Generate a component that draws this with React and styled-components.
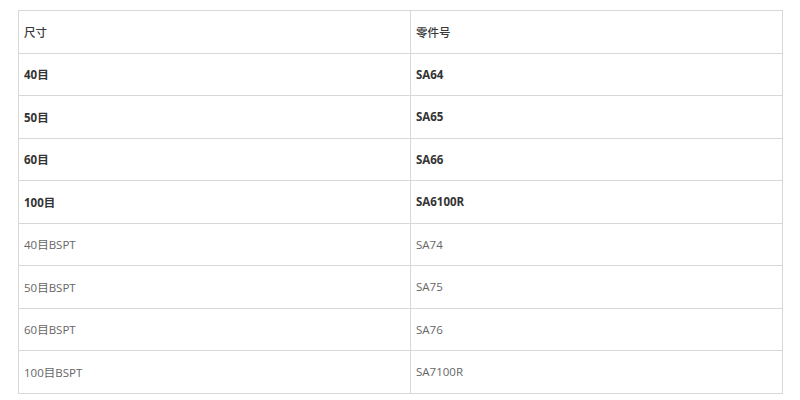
import React from 'react';
import styled, { createGlobalStyle } from 'styled-components';

const GlobalStyle = createGlobalStyle`
  body {
    margin: 0;
    background: #fff;
    font-family: "Open Sans", "Noto Sans CJK SC", sans-serif;
  }
`;

const Page = styled.div`
  padding: 10px 17px 0 18px;
`;

const Table = styled.table`
  width: 100%;
  border-collapse: collapse;
  table-layout: fixed;
  border: 1px solid #dcdcdc;
`;

const SizeCol = styled.col`
  width: 392px;
`;

const Cell = styled.td`
  height: 41.5px;
  padding: 0 5px;
  border: 1px solid #d8d8d8;
  font-size: 11.5px;
  color: ${({ bold }) => (bold ? '#333' : '#666')};
  font-weight: ${({ bold }) => (bold ? 700 : 400)};
  vertical-align: middle;
`;

const HeadCell = styled(Cell)`
  color: #3a3a3a;
  font-weight: 500;
`;

const rows = [
  ['40目', 'SA64', true],
  ['50目', 'SA65', true],
  ['60目', 'SA66', true],
  ['100目', 'SA6100R', true],
  ['40目BSPT', 'SA74', false],
  ['50目BSPT', 'SA75', false],
  ['60目BSPT', 'SA76', false],
  ['100目BSPT', 'SA7100R', false],
];

const App = () => (
  <Page>
    <GlobalStyle />
    <Table>
      <colgroup>
        <SizeCol />
        <col />
      </colgroup>
      <tbody>
        <tr>
          <HeadCell>尺寸</HeadCell>
          <HeadCell>零件号</HeadCell>
        </tr>
        {rows.map(([size, part, bold]) => (
          <tr key={size}>
            <Cell bold={bold}>{size}</Cell>
            <Cell bold={bold}>{part}</Cell>
          </tr>
        ))}
      </tbody>
    </Table>
  </Page>
);

export default App;
